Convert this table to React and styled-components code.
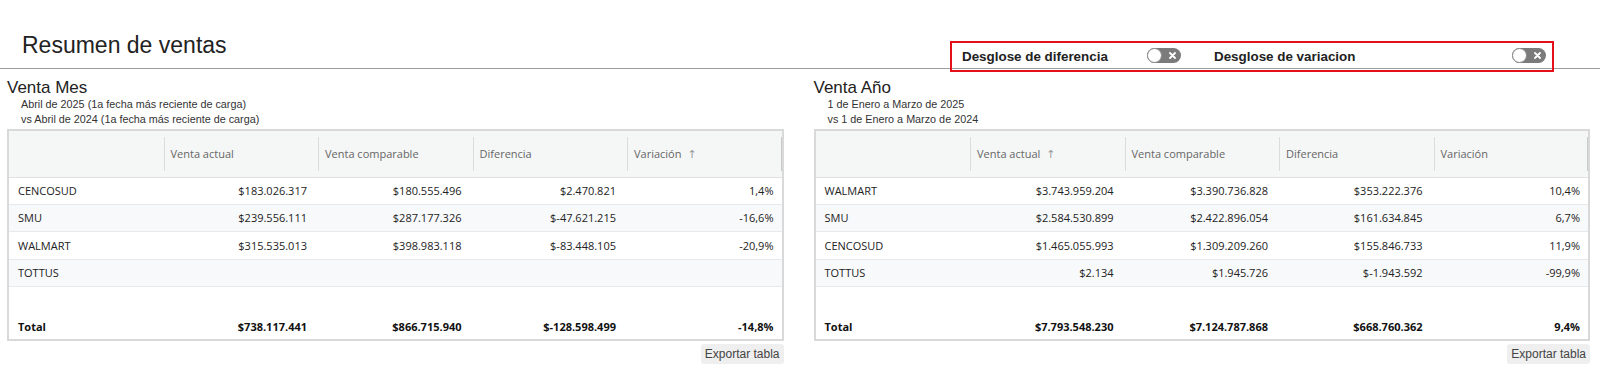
import React from 'react';
import styled, { createGlobalStyle } from 'styled-components';

const Global = createGlobalStyle`
  html, body { margin: 0; padding: 0; background: #fff; }
  body { font-family: "Liberation Sans", Arial, sans-serif; color: #222; }
  * { box-sizing: border-box; }
`;

const Page = styled.div`
  position: relative;
  width: 1600px;
  height: 373px;
  overflow: hidden;
`;

const Header = styled.header`
  padding: 31px 0 9px 22px;
  border-bottom: 1px solid #9c9c9c;
`;

const Title = styled.h1`
  margin: 0;
  font-weight: 400;
  font-size: 23px;
  line-height: 28px;
  color: #222;
`;

const ToggleBox = styled.div`
  position: absolute;
  left: 950px;
  top: 41px;
  width: 604px;
  height: 31px;
  border: 2px solid #e3101a;
  display: flex;
  align-items: center;
  padding: 0 6px 0 10px;
`;

const ToggleGroup = styled.div`
  display: flex;
  align-items: center;
  justify-content: space-between;
  width: ${p => p.$w};
  margin-right: ${p => p.$mr || 0}px;
  flex: ${p => (p.$grow ? 1 : 'none')};
`;

const ToggleLabel = styled.span`
  font-weight: 700;
  font-size: 13.4px;
  color: #222;
`;

const Switch = styled.span`
  position: relative;
  display: inline-flex;
  align-items: center;
  justify-content: flex-end;
  width: 34px;
  height: 15px;
  border-radius: 8px;
  background: #7b7b7b;
  padding-right: 5px;
  margin-top: -2px;
`;

const Knob = styled.span`
  position: absolute;
  left: 0;
  top: 0;
  width: 15px;
  height: 15px;
  border-radius: 50%;
  background: #fff;
  border: 1px solid #8a8a8a;
`;

const Columns = styled.main`
  display: grid;
  grid-template-columns: 1fr 1fr;
  column-gap: 30px;
  padding: 9px 10px 0 7px;
`;

const Section = styled.section`
  display: flex;
  flex-direction: column;
`;

const SectionTitle = styled.h2`
  margin: 0;
  font-weight: 400;
  font-size: 17px;
  line-height: 19px;
  color: #222;
`;

const Sub = styled.div`
  padding-left: 14px;
  font-size: 10.8px;
  line-height: 15px;
  color: #333;
`;

const TableWrap = styled.div`
  margin-top: 2px;
  border: 2px solid #d9d9d9;
`;

const Table = styled.table`
  width: 100%;
  table-layout: fixed;
  border-collapse: collapse;
  font-family: "Open Sans", "Noto Sans", sans-serif;
  font-size: 11px;
  color: #222;
`;

const Th = styled.th`
  position: relative;
  height: 46px;
  background: #f5f6f6;
  border-bottom: 1px solid #e2e2e2;
  text-align: left;
  font-weight: 400;
  color: #666;
  padding: 0 7px;
  white-space: nowrap;
  &::before {
    content: '';
    display: ${p => (p.$sep ? 'block' : 'none')};
    position: absolute;
    left: 0;
    top: 6px;
    bottom: 6px;
    width: 1px;
    background: #dcdcdc;
  }
  &::after {
    content: '';
    display: ${p => (p.$last ? 'block' : 'none')};
    position: absolute;
    right: 0;
    top: 6px;
    bottom: 6px;
    width: 1px;
    background: #c9c9c9;
  }
`;

const Arrow = styled.span`
  color: #9a9a9a;
  margin-left: 6px;
  font-family: "DejaVu Sans", sans-serif;
  font-size: 11px;
`;

const Tr = styled.tr`
  background: ${p => (p.$alt ? '#f8f9fb' : '#fff')};
`;

const Td = styled.td`
  height: ${p => p.$h}px;
  border-bottom: ${p => (p.$plain ? 'none' : '1px solid #e8e9eb')};
  padding: 0 ${p => (p.$last ? 8 : 11)}px 0 ${p => (p.$first ? 9 : 7)}px;
  text-align: ${p => (p.$first ? 'left' : 'right')};
  font-weight: ${p => (p.$bold ? 700 : 400)};
  color: ${p => (p.$bold ? '#111' : '#222')};
  white-space: nowrap;
`;

const ExportRow = styled.div`
  display: flex;
  justify-content: flex-end;
  margin-top: 3px;
`;

const ExportButton = styled.button`
  height: 20px;
  padding: 0 4px;
  border: none;
  border-radius: 3px;
  background: #efefef;
  font-family: "Liberation Sans", Arial, sans-serif;
  font-size: 12px;
  color: #444;
`;

const CloseIcon = () => (
  <svg width="7" height="7" viewBox="0 0 7 7">
    <path d="M1 1 L6 6 M6 1 L1 6" stroke="#fff" strokeWidth="1.8" strokeLinecap="round" />
  </svg>
);

const Toggle = () => (
  <Switch>
    <Knob />
    <CloseIcon />
  </Switch>
);

const tables = [
  {
    title: 'Venta Mes',
    subs: ['Abril de 2025 (1a fecha más reciente de carga)', 'vs Abril de 2024 (1a fecha más reciente de carga)'],
    sortCol: 4,
    rows: [
      ['CENCOSUD', '$183.026.317', '$180.555.496', '$2.470.821', '1,4%'],
      ['SMU', '$239.556.111', '$287.177.326', '$-47.621.215', '-16,6%'],
      ['WALMART', '$315.535.013', '$398.983.118', '$-83.448.105', '-20,9%'],
      ['TOTTUS', '', '', '', ''],
    ],
    total: ['Total', '$738.117.441', '$866.715.940', '$-128.598.499', '-14,8%'],
  },
  {
    title: 'Venta Año',
    subs: ['1 de Enero a Marzo de 2025', 'vs 1 de Enero a Marzo de 2024'],
    sortCol: 1,
    rows: [
      ['WALMART', '$3.743.959.204', '$3.390.736.828', '$353.222.376', '10,4%'],
      ['SMU', '$2.584.530.899', '$2.422.896.054', '$161.634.845', '6,7%'],
      ['CENCOSUD', '$1.465.055.993', '$1.309.209.260', '$155.846.733', '11,9%'],
      ['TOTTUS', '$2.134', '$1.945.726', '$-1.943.592', '-99,9%'],
    ],
    total: ['Total', '$7.793.548.230', '$7.124.787.868', '$668.760.362', '9,4%'],
  },
];

const headers = ['', 'Venta actual', 'Venta comparable', 'Diferencia', 'Variación'];
const rowHeights = [27, 27, 28, 27];

const SalesTable = ({ t }) => (
  <Section>
    <SectionTitle>{t.title}</SectionTitle>
    {t.subs.map(s => (
      <Sub key={s}>{s}</Sub>
    ))}
    <TableWrap>
      <Table>
        <thead>
          <tr>
            {headers.map((h, i) => (
              <Th key={i} $sep={i > 0} $last={i === 4}>
                {h}
                {t.sortCol === i && <Arrow>↑</Arrow>}
              </Th>
            ))}
          </tr>
        </thead>
        <tbody>
          {t.rows.map((r, ri) => (
            <Tr key={ri} $alt={ri % 2 === 1}>
              {r.map((c, ci) => (
                <Td key={ci} $h={rowHeights[ri]} $first={ci === 0} $last={ci === 4}>
                  {c}
                </Td>
              ))}
            </Tr>
          ))}
          <Tr>
            <Td $plain $h={27} colSpan={5} />
          </Tr>
          <Tr>
            {t.total.map((c, ci) => (
              <Td key={ci} $plain $bold $h={26} $first={ci === 0} $last={ci === 4}>
                {c}
              </Td>
            ))}
          </Tr>
        </tbody>
      </Table>
    </TableWrap>
    <ExportRow>
      <ExportButton>Exportar tabla</ExportButton>
    </ExportRow>
  </Section>
);

export default function App() {
  return (
    <Page>
      <Global />
      <Header>
        <Title>Resumen de ventas</Title>
      </Header>
      <ToggleBox>
        <ToggleGroup $w="219px" $mr={33}>
          <ToggleLabel>Desglose de diferencia</ToggleLabel>
          <Toggle />
        </ToggleGroup>
        <ToggleGroup $grow>
          <ToggleLabel>Desglose de variacion</ToggleLabel>
          <Toggle />
        </ToggleGroup>
      </ToggleBox>
      <Columns>
        {tables.map(t => (
          <SalesTable key={t.title} t={t} />
        ))}
      </Columns>
    </Page>
  );
}
